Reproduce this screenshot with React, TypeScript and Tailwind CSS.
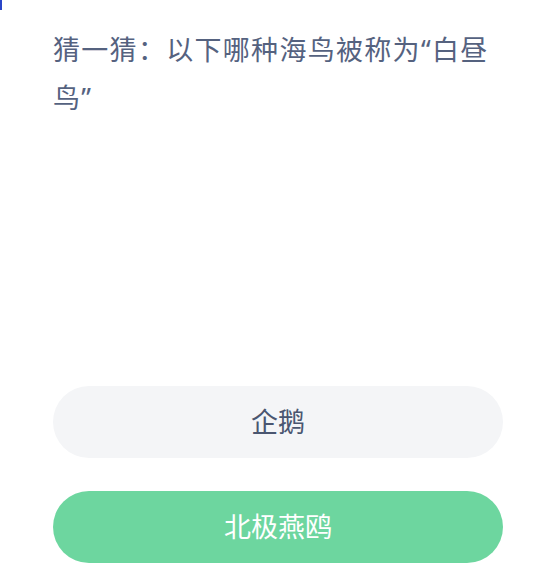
export default function App() {
  const options = [
    { label: '企鹅', correct: false },
    { label: '北极燕鸥', correct: true },
  ];

  return (
    <div
      className="relative h-[587px] w-[535px] overflow-hidden bg-white"
      style={{ fontFamily: '"Noto Sans", "Noto Sans CJK SC", sans-serif' }}
    >
      {/* 左上角的细蓝条 */}
      <div className="absolute left-0 top-0 h-[10px] w-[2px] bg-[#2a46c8]" />

      <div className="pl-[53px] pr-[32px] pt-[26px]">
        <p className="text-[27px] leading-[48px] tracking-[1.3px] text-[#55627f]">
          猜一猜：以下哪种海鸟被称为“白昼鸟”
        </p>
      </div>

      <div className="absolute left-[53px] right-[32px] top-[386px] flex flex-col gap-[33px]">
        {options.map((o) => (
          <button
            key={o.label}
            className={
              o.correct
                ? 'flex h-[72px] w-full items-center justify-center rounded-full bg-[#6dd69f] text-[27px] text-white'
                : 'flex h-[72px] w-full items-center justify-center rounded-full bg-[#f4f5f7] text-[27px] text-[#4a5670]'
            }
          >
            {o.label}
          </button>
        ))}
      </div>
    </div>
  );
}
